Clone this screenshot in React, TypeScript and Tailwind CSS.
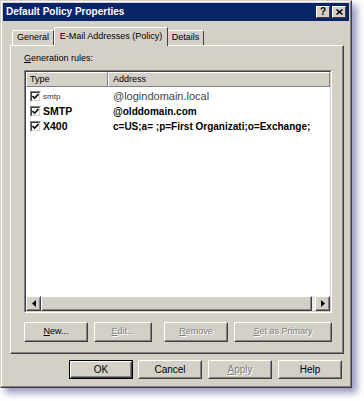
import React from "react";

const font = { fontFamily: '"Liberation Sans", Arial, sans-serif' };

function Raised({
  className = "",
  children,
  def = false,
}: {
  className?: string;
  children?: React.ReactNode;
  def?: boolean;
}) {
  const inner = (
    <div className="h-full w-full bg-[#d4d0c8] border border-t-white border-l-white border-r-[#404040] border-b-[#404040]">
      <div className="h-full w-full border border-t-[#d4d0c8] border-l-[#d4d0c8] border-r-[#808080] border-b-[#808080] flex items-center justify-center overflow-visible">
        {children}
      </div>
    </div>
  );
  if (def) {
    return <div className={`border border-black ${className}`}>{inner}</div>;
  }
  return <div className={className}>{inner}</div>;
}

function TitleBtn({ children, className = "" }: { children: React.ReactNode; className?: string }) {
  return (
    <div className={`w-[14px] h-[12px] bg-[#d4d0c8] border-t border-l border-t-white border-l-white border-r border-b border-r-[#404040] border-b-[#404040] flex items-center justify-center ${className}`}>
      {children}
    </div>
  );
}

function Disabled({ children }: { children: React.ReactNode }) {
  return (
    <span className="text-[#808080] [text-shadow:1px_1px_0_#ffffff]">{children}</span>
  );
}

function Check() {
  return (
    <div className="w-[11px] h-[11px] shrink-0 border border-t-[#808080] border-l-[#808080] border-r-white border-b-white">
      <div className="w-full h-full border border-t-[#404040] border-l-[#404040] border-r-[#d4d0c8] border-b-[#d4d0c8] bg-white flex items-center justify-center">
        <svg width="7" height="7" viewBox="0 0 7 7">
          <path d="M0.5 3 L2.6 5.2 L6.5 1" stroke="#000" strokeWidth="1.6" fill="none" />
        </svg>
      </div>
    </div>
  );
}

function Arrow({ dir }: { dir: "l" | "r" }) {
  return (
    <svg width="4" height="7" viewBox="0 0 4 7">
      {dir === "l" ? <path d="M4 0 L0 3.5 L4 7 Z" fill="#000" /> : <path d="M0 0 L4 3.5 L0 7 Z" fill="#000" />}
    </svg>
  );
}

export default function App() {
  return (
    <div className="w-[364px] h-[401px] bg-white overflow-hidden" style={font}>
      <div className="w-[352px] h-[388px] bg-[#d4d0c8] border border-t-[#d4d0c8] border-l-[#d4d0c8] border-r-[#404040] border-b-[#404040] shadow-[5px_5px_7px_rgba(70,70,140,0.55)]">
        <div className="h-full w-full border border-t-white border-l-white border-r-[#808080] border-b-[#808080] p-[1px] flex flex-col">
          {/* Title bar */}
          <div className="h-[18px] bg-[#0a246a] flex items-center pl-[3px] pr-[3px] shrink-0">
            <span className="text-white font-bold text-[10px] leading-none flex-1">Default Policy Properties</span>
            <TitleBtn>
              <span className="text-[10px] font-bold leading-none text-black">?</span>
            </TitleBtn>
            <TitleBtn className="ml-[2px]">
              <svg width="7" height="6" viewBox="0 0 7 6">
                <path d="M0.5 0.5 L6.5 5.5 M6.5 0.5 L0.5 5.5" stroke="#000" strokeWidth="1.5" />
              </svg>
            </TitleBtn>
          </div>

          {/* Tabs */}
          <div className="mt-[6px] ml-[7px] mr-[5px] flex flex-col">
            <div className="h-[18px] flex items-end pl-[2px] relative z-10">
              <div className="w-[42px] h-[15px] border-t border-l border-t-white border-l-white border-r border-r-[#404040] rounded-tl-[2px] flex items-center justify-center text-[9px] text-black">
                General
              </div>
              <div className="w-[114px] h-[19px] -mb-[1px] bg-[#d4d0c8] border-t border-l border-t-white border-l-white border-r border-r-[#404040] rounded-tl-[2px] flex items-center justify-center text-[9px] text-black">
                E-Mail Addresses (Policy)
              </div>
              <div className="w-[36px] h-[15px] border-t border-t-white border-r border-r-[#404040] rounded-tr-[2px] flex items-center justify-center text-[9px] text-black">
                Details
              </div>
            </div>
            {/* Panel */}
            <div className="w-[334px] h-[309px] border border-t-white border-l-white border-r-[#404040] border-b-[#404040]">
              <div className="w-full h-full border-r border-b border-r-[#808080] border-b-[#808080] pl-[13px] pt-[7px] flex flex-col">
                <div className="text-[9px] leading-[11px] text-black">
                  <span className="underline">G</span>eneration rules:
                </div>
                {/* List */}
                <div className="mt-[6px] w-[308px] h-[243px] border border-t-[#808080] border-l-[#808080] border-r-white border-b-white">
                  <div className="w-full h-full border border-t-[#404040] border-l-[#404040] border-r-[#d4d0c8] border-b-[#d4d0c8] bg-white flex flex-col">
                    <div className="h-[15px] flex shrink-0">
                      <div className="w-[82px] h-full border border-t-white border-l-white border-r-[#808080] border-b-[#808080] bg-[#d4d0c8] flex items-center pl-[3px] text-[9px] text-black">
                        Type
                      </div>
                      <div className="flex-1 h-full border border-t-white border-l-white border-r-[#808080] border-b-[#808080] bg-[#d4d0c8] flex items-center pl-[4px] text-[9px] text-black">
                        Address
                      </div>
                    </div>
                    <div className="flex-1 pt-[2px] flex flex-col">
                      <div className="h-[15px] flex items-center">
                        <div className="w-[82px] flex items-center pl-[4px]">
                          <Check />
                          <span className="ml-[2px] text-[8px] text-[#333]">smtp</span>
                        </div>
                        <span className="pl-[5px] text-[11px] text-[#444] leading-none">@logindomain.local</span>
                      </div>
                      <div className="h-[15px] flex items-center">
                        <div className="w-[82px] flex items-center pl-[4px]">
                          <Check />
                          <span className="ml-[2px] text-[10.5px] font-bold text-black leading-none">SMTP</span>
                        </div>
                        <span className="pl-[5px] text-[10px] font-bold text-black leading-none">@olddomain.com</span>
                      </div>
                      <div className="h-[15px] flex items-center">
                        <div className="w-[82px] flex items-center pl-[4px]">
                          <Check />
                          <span className="ml-[2px] text-[10.5px] font-bold text-black leading-none">X400</span>
                        </div>
                        <span className="pl-[5px] text-[10px] font-bold text-black leading-none whitespace-nowrap">
                          c=US;a= ;p=First Organizati;o=Exchange;
                        </span>
                      </div>
                    </div>
                    {/* scrollbar */}
                    <div className="h-[15px] flex bg-[#ece9e2] shrink-0">
                      <Raised className="w-[15px] h-full">
                        <Arrow dir="l" />
                      </Raised>
                      <Raised className="flex-1 h-full mr-[3px]" />
                      <Raised className="w-[15px] h-full">
                        <Arrow dir="r" />
                      </Raised>
                    </div>
                  </div>
                </div>
                {/* Buttons row */}
                <div className="mt-[9px] flex text-[9px] text-black">
                  <Raised className="w-[64px] h-[20px]">
                    <span>
                      <span className="underline">N</span>ew...
                    </span>
                  </Raised>
                  <Raised className="w-[58px] h-[20px] ml-[6px]">
                    <Disabled>
                      <span className="underline">E</span>dit...
                    </Disabled>
                  </Raised>
                  <Raised className="w-[64px] h-[20px] ml-[12px]">
                    <Disabled>
                      <span className="underline">R</span>emove
                    </Disabled>
                  </Raised>
                  <Raised className="w-[98px] h-[20px] ml-[6px]">
                    <Disabled>
                      <span className="underline">S</span>et as Primary
                    </Disabled>
                  </Raised>
                </div>
              </div>
            </div>
          </div>

          {/* Bottom buttons */}
          <div className="mt-[6px] flex text-[10px] text-black pl-[66px]">
            <Raised def className="w-[64px] h-[19px]">
              <span>OK</span>
            </Raised>
            <Raised className="w-[64px] h-[19px] ml-[5px]">
              <span>Cancel</span>
            </Raised>
            <Raised className="w-[64px] h-[19px] ml-[6px]">
              <Disabled>
                <span className="underline">A</span>pply
              </Disabled>
            </Raised>
            <Raised className="w-[64px] h-[19px] ml-[6px]">
              <span>Help</span>
            </Raised>
          </div>
        </div>
      </div>
    </div>
  );
}
